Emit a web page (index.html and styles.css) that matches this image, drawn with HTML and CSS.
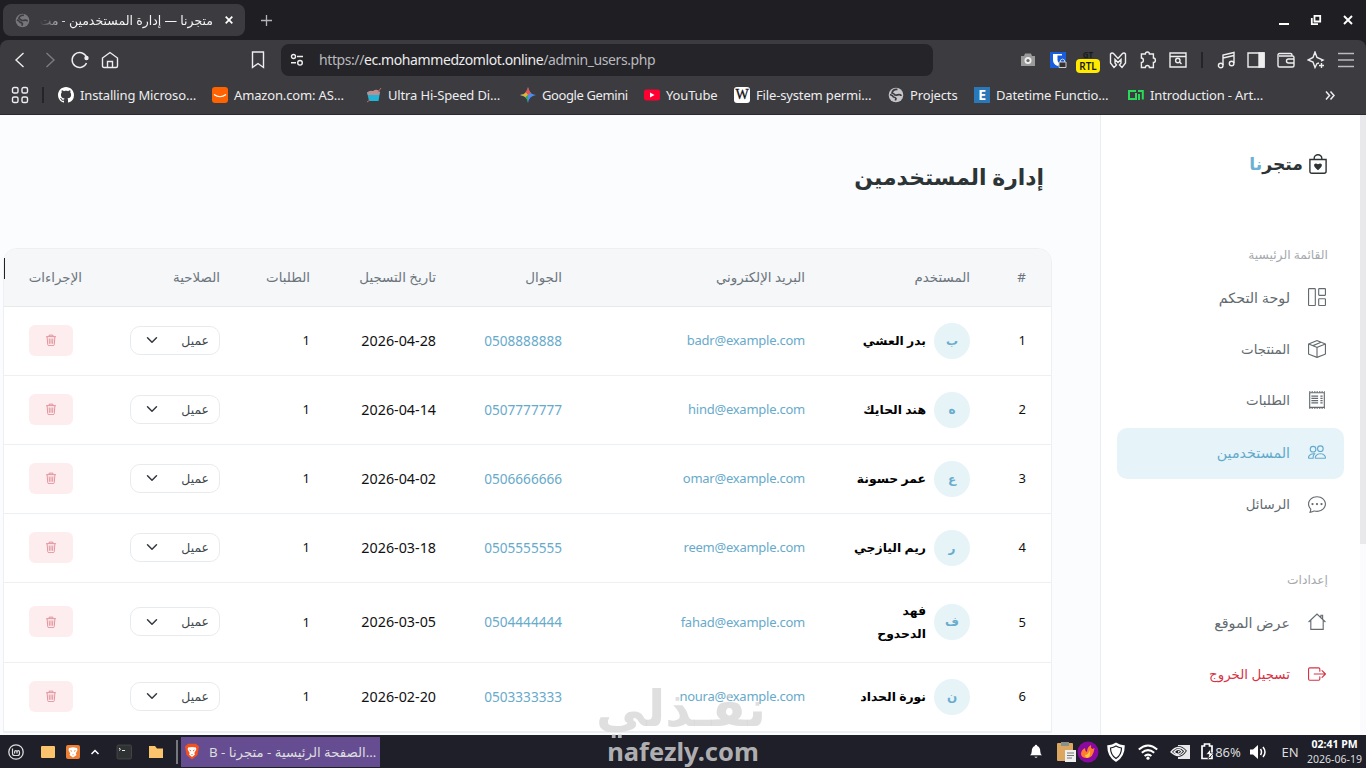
FILE: index.html
```html
<!DOCTYPE html>
<html lang="ar">
<head>
    <meta charset="UTF-8">
    <meta name="viewport" content="width=device-width, initial-scale=1.0">
    <title>متجرنا — إدارة المستخدمين</title>
    <link rel="stylesheet" href="styles.css">
</head>
<body>

<svg class="defs" xmlns="http://www.w3.org/2000/svg">
    <symbol id="trash" viewBox="0 0 16 16"><path d="M1.500 3.500h13M5.500 3V1.500h5V3M2.800 4l.9 10.200q.1 1.300 1.300 1.300h6q1.200 0 1.300-1.300L13.200 4M5.600 6l.3 7M8 6v7M10.400 6l-.3 7" fill="none" stroke="currentColor" stroke-width="1.200"/></symbol>
    <symbol id="chevron" viewBox="0 0 16 16"><path d="M2 5l6 6 6-6" fill="none" stroke="#343a40" stroke-width="2" stroke-linecap="round" stroke-linejoin="round"/></symbol>
    <symbol id="globe" viewBox="0 0 16 16"><circle cx="8" cy="8" r="7.300" fill="currentColor"/><path d="M9.500 2.500Q5 2 4 6q2 .5 3 2 2.500.3 4-.5 2 0 2 1.500M2 7.500q3 1 3.500 2.500 2 .2 2.500 1.500-.5 1-.5 2" fill="none" stroke="#3b3b40" stroke-width="1.700"/></symbol>
    <symbol id="brave" viewBox="0 0 16 16"><path d="M4.500 0h7L15 3l-1.500 8.500L8 16l-5.500-4.500L1 3z" fill="#f4511e"/><path d="M4 4l4-.6 4 .6.3 2-2 3.500.7 1.500L8 13.500 5 11l.7-1.500-2-3.500z" fill="#fff"/><path d="M5 6l2 .7L6.500 8zM11 6l-2 .7.5 1.300zM7 10.500h2L8 11.600z" fill="#f4511e"/></symbol>
</svg>

<div class="titlebar">
    <div class="tab">
        <svg class="tab-globe" width="15" height="15"><use href="#globe"/></svg>
        <span class="tab-title" dir="rtl">متجرنا — إدارة المستخدمين - مت</span>
        <svg width="8" height="8" viewBox="0 0 8 8"><path d="M.7.7l6.600 6.600M7.300.7L.7 7.300" stroke="#fff" stroke-width="1.700"/></svg>
    </div>
    <svg class="new-tab" width="11" height="11" viewBox="0 0 11 11"><path d="M5.500 0v11M0 5.500h11" stroke="#b4b4b8" stroke-width="1.300"/></svg>
    <div class="window-buttons">
        <svg width="12" height="12" viewBox="0 0 12 12"><path d="M1 10h10" stroke="#fff" stroke-width="2"/></svg>
        <svg width="12" height="12" viewBox="0 0 12 12"><path d="M4.500 1.800h5.700v5.700H4.500zM1.800 4v6.200H8" fill="none" stroke="#fff" stroke-width="1.800"/></svg>
        <svg width="12" height="12" viewBox="0 0 12 12"><path d="M2 2l8 8M10 2l-8 8" stroke="#fff" stroke-width="1.900"/></svg>
    </div>
</div>

<div class="toolbar">
    <div class="nav-buttons">
        <svg viewBox="0 0 18 18"><path d="M12.500 2L5 9l7.500 7" /></svg>
        <svg class="dim" viewBox="0 0 18 18"><path d="M5.500 2L13 9l-7.500 7"/></svg>
        <svg viewBox="0 0 18 18"><path d="M15.500 6A7.500 7.500 0 1 0 15.500 12"/><circle cx="15.500" cy="7" r="1.500" fill="#eee"/></svg>
        <svg viewBox="0 0 18 18"><path d="M1.500 7L9 1.500 16.500 7v8q0 1.500-1.500 1.500H3q-1.500 0-1.500-1.500zM6.500 16v-5.500h5V16"/></svg>
    </div>
    <svg class="bookmark" viewBox="0 0 18 18"><path d="M3.500 1h11v15.500L9 12.500l-5.500 4z"/></svg>
    <div class="urlbar">
        <svg width="14" height="14" viewBox="0 0 14 14"><circle cx="3.500" cy="3.500" r="2"/><path d="M7 3.500h6M1 9.800h5"/><circle cx="10" cy="9.800" r="2.300"/></svg>
        <span>https://<b>ec.mohammedzomlot.online</b>/admin_users.php</span>
    </div>
    <div class="extensions">
        <svg viewBox="0 0 18 18"><path d="M2 5h3l1-2.500h6L13 5h3v10H2z" fill="#9a9a9a" stroke="none"/><circle cx="9" cy="9.500" r="3.500" fill="#eee" stroke="none"/><circle cx="9" cy="9.500" r="1.600" fill="#666" stroke="none"/></svg>
        <svg viewBox="0 0 18 18"><path d="M1 1h16v16H1z" fill="#175ddc" stroke="none"/><path d="M4 3h9v6q0 4-4.500 6Q4 13 4 9z" fill="#fff" stroke="none"/><path d="M10.500 4.500H6V9q0 2.500 2.500 4 2-1 2-3z" fill="#175ddc" stroke="none" transform="translate(2.500)"/><path d="M10 11h7v5.500h-7z" fill="#333" stroke="#ccc" stroke-width="1"/><path d="M11.500 11V9q2-2 4 0v2" stroke="#ccc" stroke-width="1"/></svg>
        <div class="rtl-ext"><small>GT</small><span>RTL</span></div>
        <svg viewBox="0 0 18 18"><path d="M1.500 3Q3 1 5 3l4 4.500L13 3q2-2 3.500 0v9L13 16.500 10.500 14l1.500-2V8.500L9 11.500l-3-3V12l1.500 2L5 16.500 1.500 12z"/></svg>
        <svg viewBox="0 0 18 18"><path d="M3 3h4q0-2 2-2t2 2h4v4q2 0 2 2.200T15 11.500v5h-4q0-2-2-2t-2 2H3v-5q2 0 2-2.200T3 7z" transform="translate(-.6)"/></svg>
        <svg viewBox="0 0 18 18"><path d="M1 2h16v14H1zM1 5.500h16"/><circle cx="8.800" cy="9.500" r="2.200"/><path d="M10.500 11l2 2"/></svg>
        <i class="sep"></i>
        <svg viewBox="0 0 18 18"><path d="M6 14V4l11-2.500V12M6 7l11-2.500"/><circle cx="3.700" cy="14.500" r="2.300"/><circle cx="14.600" cy="12.500" r="2.300"/></svg>
        <svg viewBox="0 0 18 18"><path d="M1 2h16v14H1z"/><path d="M12 2h5v14h-5z" fill="#eee"/></svg>
        <svg viewBox="0 0 18 18"><path d="M15 5V4q0-1.500-1.500-1.500h-11Q1 2.500 1 4v10.500Q1 16 2.500 16h13q1.500 0 1.500-1.500V6.500Q17 5 15.500 5H2M17 8h-5.500q-2 0-2 2t2 2H17"/></svg>
        <svg viewBox="0 0 18 18"><path d="M12 12l-2 .5-2 4-2-5.500L1 9l5-2.500L8 1l2 5.500L16 9l-2 1M14.500 12v5M12 14.500h5"/></svg>
        <svg viewBox="0 0 18 18"><path d="M1 2.500h16M1 9h16M1 15.500h16" stroke="#bbb"/></svg>
    </div>
</div>

<div class="bookmarks">
    <svg class="apps" viewBox="0 0 18 18"><rect x="1.500" y="1.500" width="5.500" height="5.500" rx="1.600"/><rect x="11" y="1.500" width="5.500" height="5.500" rx="1.600"/><rect x="1.500" y="11" width="5.500" height="5.500" rx="1.600"/><rect x="11" y="11" width="5.500" height="5.500" rx="1.600"/></svg>
    <i class="sep"></i>
    <div class="links">
        <a><svg viewBox="0 0 16 16"><path fill="#fff" d="M8 0C3.580 0 0 3.580 0 8c0 3.540 2.290 6.530 5.470 7.590.4.07.55-.17.55-.38 0-.19-.01-.82-.01-1.490-2.010.37-2.530-.49-2.690-.94-.09-.23-.48-.94-.82-1.130-.28-.15-.68-.52-.01-.53.63-.01 1.080.58 1.230.82.72 1.210 1.870.87 2.330.66.07-.52.28-.87.51-1.070-1.780-.2-3.640-.89-3.640-3.950 0-.87.31-1.590.82-2.150-.08-.2-.36-1.020.08-2.120 0 0 .67-.21 2.200.82.64-.18 1.320-.27 2-.27.68 0 1.360.09 2 .27 1.530-1.040 2.200-.82 2.200-.82.44 1.100.16 1.920.08 2.120.51.56.82 1.270.82 2.150 0 3.070-1.870 3.750-3.650 3.950.29.25.54.73.54 1.480 0 1.070-.01 1.930-.01 2.200 0 .21.15.46.55.38A8.012 8.012 0 0 0 16 8c0-4.420-3.580-8-8-8z"/></svg><span>Installing Microso…</span></a>
        <a><svg viewBox="0 0 16 16"><rect width="16" height="16" rx="3" fill="#ff6200"/><path d="M2 7.500q6 4.500 12 0" fill="none" stroke="#fff" stroke-width="1.200"/></svg><span>Amazon.com: AS…</span></a>
        <a><svg viewBox="0 0 16 16"><path d="M1 5h13l-1.500 9H3z" fill="#21b4d6"/><path d="M1 6q2-3 6-2 4-3 7 1l-1 3H2z" fill="#b98f92"/><path d="M12 5l3-4M1 15l3-2" stroke="#c46c5e"/></svg><span>Ultra Hi-Speed Di…</span></a>
        <a><svg viewBox="0 0 16 16"><path d="M8 0q1 7 8 8-7 1-8 8-1-7-8-8 7-1 8-8z" fill="#4a8cf0"/><path d="M8 0q1 4 3 6L8 8 5 5.500Q7.500 4 8 0z" fill="#e5544f"/><path d="M0 8q4-.5 6-2.500L8 8l-2 2.500Q4 8.500 0 8z" fill="#e4b52d"/><path d="M5.500 10L8 8v8q-.5-4-2.500-6z" fill="#35a853"/></svg><span class="tight">Google Gemini</span></a>
        <a><svg viewBox="0 0 16 16"><rect y="2.500" width="16" height="11" rx="2.500" fill="#ff0033"/><path d="M6 5.500v5L10.500 8z" fill="#fff"/></svg><span>YouTube</span></a>
        <a><b class="wiki">W</b><span>File-system permi…</span></a>
        <a><svg class="grey" viewBox="0 0 16 16"><use href="#globe"/></svg><span>Projects</span></a>
        <a><b class="ebox">E</b><span>Datetime Functio…</span></a>
        <a><svg viewBox="0 0 16 16"><path d="M8 4H1v8h7V6M10 4h4.800v8.500M11 7v6" fill="none" stroke="#28d95a" stroke-width="2"/></svg><span>Introduction - Art…</span></a>
    </div>
    <svg class="more" width="10" height="9" viewBox="0 0 10 9"><path d="M1 .5l3.500 4L1 8.500M5.500.5l3.500 4-3.500 4"/></svg>
</div>

<div class="page" dir="rtl">
    <div class="scroll-track"><div class="scroll-thumb"></div></div>

    <aside class="sidebar">
        <div class="brand">
            <svg width="18" height="20" viewBox="0 0 18 20"><path d="M.9 5.500h16.200v11.700q0 2-2 2H2.900q-2 0-2-2zM5.200 5.500V4.200a3.800 3.500 0 0 1 7.600 0v1.300" fill="none" stroke="#2d3436" stroke-width="1.400"/><path d="M9 16.200C2.500 11.800 5.300 8 9 10.300c3.700-2.300 6.500 1.500 0 5.900z" fill="#2d3436"/></svg>
            <span class="brand-name">متجر<em>نا</em></span>
        </div>

        <div class="menu-label">القائمة الرئيسية</div>
        <nav class="menu">
            <a><svg viewBox="0 0 16 16"><path d="M6 1H1v14h5V1zm9 0h-5v5h5V1zm0 9v5h-5v-5h5zM0 1a1 1 0 0 1 1-1h5a1 1 0 0 1 1 1v14a1 1 0 0 1-1 1H1a1 1 0 0 1-1-1V1zm9 0a1 1 0 0 1 1-1h5a1 1 0 0 1 1 1v5a1 1 0 0 1-1 1h-5a1 1 0 0 1-1-1V1zm1 8a1 1 0 0 0-1 1v5a1 1 0 0 0 1 1h5a1 1 0 0 0 1-1v-5a1 1 0 0 0-1-1h-5z"/></svg><span class="wide">لوحة التحكم</span></a>
            <a><svg viewBox="0 0 16 16"><path d="M8.186 1.113a.5.5 0 0 0-.372 0L1.846 3.500l2.404.961L10.404 2l-2.218-.887zm3.564 1.426L5.596 5 8 5.961 14.154 3.500l-2.404-.961zm3.250 1.700-6.500 2.600v7.922l6.500-2.600V4.240zM7.500 14.762V6.838L1 4.239v7.923l6.500 2.600zM7.443.184a1.500 1.500 0 0 1 1.114 0l7.129 2.852A.5.5 0 0 1 16 3.500v8.662a1 1 0 0 1-.629.928l-7.185 2.874a.5.5 0 0 1-.372 0L.63 13.090a1 1 0 0 1-.63-.928V3.500a.5.5 0 0 1 .314-.464L7.443.184z"/></svg><span>المنتجات</span></a>
            <a><svg viewBox="0 0 16 16"><path d="M1.500 1.500h13v13h-13z" fill="none" stroke="currentColor"/><path d="M1 .8h14M1 15.200h14" stroke="currentColor" stroke-dasharray="1.200 1"/><path d="M3 4.500h6M3 6.500h6M3 8.500h6M3 10.500h6M11 4.500h2M11 6.500h2M11 8.500h2M11 10.500h2" stroke="currentColor"/></svg><span>الطلبات</span></a>
            <a class="active"><svg viewBox="0 0 16 16"><path d="M15 14s1 0 1-1-1-4-5-4-5 3-5 4 1 1 1 1h8zm-7.978-1A.261.261 0 0 1 7 12.996c.001-.264.167-1.030.76-1.720C8.312 10.629 9.282 10 11 10c1.717 0 2.687.63 3.240 1.276.593.69.758 1.457.76 1.720l-.008.002A.274.274 0 0 1 15 13H7.022zM11 7a2 2 0 1 0 0-4 2 2 0 0 0 0 4zm3-2a3 3 0 1 1-6 0 3 3 0 0 1 6 0zM6.936 9.280a5.880 5.880 0 0 0-1.230-.247A7.350 7.350 0 0 0 5 9c-4 0-5 3-5 4 0 .667.333 1 1 1h4.216A2.238 2.238 0 0 1 5 13c0-1.010.377-2.042 1.090-2.904.243-.294.526-.569.846-.816zM4.920 10A5.493 5.493 0 0 0 4 13H1c0-.26.164-1.030.76-1.724.545-.636 1.492-1.256 3.160-1.275zM1.500 5.500a3 3 0 1 1 6 0 3 3 0 0 1-6 0zm3-2a2 2 0 1 0 0 4 2 2 0 0 0 0-4z"/></svg><span class="wide">المستخدمين</span></a>
            <a><svg viewBox="0 0 16 16"><path d="M5 8a1 1 0 1 1-2 0 1 1 0 0 1 2 0zm4 0a1 1 0 1 1-2 0 1 1 0 0 1 2 0zm3 1a1 1 0 1 0 0-2 1 1 0 0 0 0 2z"/><path d="m2.165 15.803.02-.004c1.830-.363 2.948-.842 3.468-1.105A9.060 9.060 0 0 0 8 15c4.418 0 8-3.134 8-7s-3.582-7-8-7-8 3.134-8 7c0 1.760.743 3.370 1.970 4.600a10.437 10.437 0 0 1-.524 2.318l-.003.011a10.722 10.722 0 0 1-.244.637c-.079.186.074.394.273.362a21.673 21.673 0 0 0 .693-.125zm.8-3.108a1 1 0 0 0-.287-.801C1.618 10.830 1 9.468 1 8c0-3.192 3.004-6 7-6s7 2.808 7 6c0 3.193-3.004 6-7 6a8.060 8.060 0 0 1-2.088-.272 1 1 0 0 0-.711.074c-.387.196-1.240.57-2.634.893a10.970 10.970 0 0 0 .398-2z"/></svg><span>الرسائل</span></a>
        </nav>

        <div class="menu-label second">إعدادات</div>
        <nav class="menu">
            <a><svg viewBox="0 0 16 16"><path d="M.5 8L8 1l7.500 7M2.500 6.500v8h11v-8M11.500 4V2h1.500v3.500" fill="none" stroke="currentColor"/></svg><span class="wide">عرض الموقع</span></a>
            <a class="logout"><svg viewBox="0 0 16 16"><path d="M10 12.500a.5.5 0 0 1-.5.5h-8a.5.5 0 0 1-.5-.5v-9a.5.5 0 0 1 .5-.5h8a.5.5 0 0 1 .5.5v2a.5.5 0 0 0 1 0v-2A1.500 1.500 0 0 0 9.500 2h-8A1.500 1.500 0 0 0 0 3.500v9A1.500 1.500 0 0 0 1.500 14h8a1.500 1.500 0 0 0 1.500-1.500v-2a.5.5 0 0 0-1 0v2z"/><path d="M15.854 8.354a.5.5 0 0 0 0-.708l-3-3a.5.5 0 0 0-.708.708L14.293 7.500H5.500a.5.5 0 0 0 0 1h8.793l-2.147 2.146a.5.5 0 0 0 .708.708l3-3z"/></svg><span>تسجيل الخروج</span></a>
        </nav>
    </aside>

    <main class="content">
        <h1>إدارة المستخدمين</h1>
        <i class="caret"></i>

        <div class="card">
            <div class="row head">
                <div>#</div><div>المستخدم</div><div>البريد الإلكتروني</div><div>الجوال</div><div>تاريخ التسجيل</div><div>الطلبات</div><div>الصلاحية</div><div>الإجراءات</div>
            </div>
            <div class="row">
                <div>1</div>
                <div class="user"><span class="avatar">ب</span><b>بدر العشي</b></div>
                <div class="mail">badr@example.com</div><div class="phone">0508888888</div><div class="date">2026-04-28</div><div>1</div>
                <div><span class="select">عميل<svg width="12" height="12"><use href="#chevron"/></svg></span></div>
                <div class="actions"><span class="delete"><svg width="12" height="12"><use href="#trash"/></svg></span></div>
            </div>
            <div class="row">
                <div>2</div>
                <div class="user"><span class="avatar">ه</span><b>هند الحايك</b></div>
                <div class="mail">hind@example.com</div><div class="phone">0507777777</div><div class="date">2026-04-14</div><div>1</div>
                <div><span class="select">عميل<svg width="12" height="12"><use href="#chevron"/></svg></span></div>
                <div class="actions"><span class="delete"><svg width="12" height="12"><use href="#trash"/></svg></span></div>
            </div>
            <div class="row">
                <div>3</div>
                <div class="user"><span class="avatar">ع</span><b>عمر حسونة</b></div>
                <div class="mail">omar@example.com</div><div class="phone">0506666666</div><div class="date">2026-04-02</div><div>1</div>
                <div><span class="select">عميل<svg width="12" height="12"><use href="#chevron"/></svg></span></div>
                <div class="actions"><span class="delete"><svg width="12" height="12"><use href="#trash"/></svg></span></div>
            </div>
            <div class="row">
                <div>4</div>
                <div class="user"><span class="avatar">ر</span><b>ريم اليازجي</b></div>
                <div class="mail">reem@example.com</div><div class="phone">0505555555</div><div class="date">2026-03-18</div><div>1</div>
                <div><span class="select">عميل<svg width="12" height="12"><use href="#chevron"/></svg></span></div>
                <div class="actions"><span class="delete"><svg width="12" height="12"><use href="#trash"/></svg></span></div>
            </div>
            <div class="row tall">
                <div>5</div>
                <div class="user"><span class="avatar">ف</span><b>فهد<br>الدحدوح</b></div>
                <div class="mail">fahad@example.com</div><div class="phone">0504444444</div><div class="date">2026-03-05</div><div>1</div>
                <div><span class="select">عميل<svg width="12" height="12"><use href="#chevron"/></svg></span></div>
                <div class="actions"><span class="delete"><svg width="12" height="12"><use href="#trash"/></svg></span></div>
            </div>
            <div class="row">
                <div>6</div>
                <div class="user"><span class="avatar">ن</span><b>نورة الحداد</b></div>
                <div class="mail">noura@example.com</div><div class="phone">0503333333</div><div class="date">2026-02-20</div><div>1</div>
                <div><span class="select">عميل<svg width="12" height="12"><use href="#chevron"/></svg></span></div>
                <div class="actions"><span class="delete"><svg width="12" height="12"><use href="#trash"/></svg></span></div>
            </div>
        </div>
    </main>
</div>

<div class="taskbar">
    <div class="launchers">
        <svg viewBox="0 0 16 16"><circle cx="8" cy="8" r="7.200" fill="none" stroke="#ddd" stroke-width="1.300"/><path d="M4.500 4.500v5q0 2 2 2h3q2 0 2-2V8q0-1.300-1.200-1.300T9 8v1.500M9 8q0-1.300-1.200-1.300T6.600 8v1.500" fill="none" stroke="#ddd" stroke-width="1.200"/></svg>
        <svg viewBox="0 0 16 16"><rect x="1" y="2" width="14" height="12" rx="1" fill="#fbc36b"/></svg>
        <svg viewBox="0 0 16 16"><rect x="1" y="1" width="14" height="14" rx="2" fill="#ee8036"/><path d="M4 4l4-.8L12 4l.5 2-1.700 3.500.7 1.500L8 13.500 4.500 11l.7-1.500L3.500 6z" fill="#fff"/><path d="M5 6l2 .7L6.500 8zM11 6l-2 .7.5 1.300zM7 10.500h2L8 11.600z" fill="#ee8036"/></svg>
        <svg viewBox="0 0 16 16"><path d="M4.500 10L8 6.500l3.500 3.500" fill="none" stroke="#fff" stroke-width="1.500"/></svg>
        <svg viewBox="0 0 16 16"><rect x="1" y="1" width="14.500" height="14" rx="1.500" fill="#2f3233" stroke="#555" stroke-width=".6"/><path d="M3 4l1.500 1.300L3 6.500M6 6.500h3" fill="none" stroke="#fff" stroke-width=".9"/></svg>
        <svg viewBox="0 0 16 16"><path d="M1 2h6l2 2.500h6V14H1z" fill="#fbc36b"/></svg>
    </div>
    <div class="task">
        <svg width="16" height="17" viewBox="0 0 16 16"><use href="#brave"/></svg>
        <span dir="ltr">B - <bdi>الصفحة الرئيسية - متجرنا</bdi>…</span>
    </div>
    <div class="tray">
        <svg width="12" height="15" viewBox="0 0 14 16"><path d="M7 0q1.300 0 1.500 1.500Q12 3 12 8q0 3 2 4.500H0Q2 11 2 8q0-5 3.500-6.500Q5.700 0 7 0zM5 14h4q-2 2.500-4 0z" fill="#fff"/></svg>
        <svg width="20" height="21" viewBox="0 0 20 21"><rect x="1" y="2" width="16" height="18" rx="1" fill="#dca660"/><path d="M5 1h8v4H5z" fill="#88908a"/><path d="M9 9h11v12H9z" fill="#eee"/><path d="M11 12h7M11 14.500h7M11 17h5" stroke="#777"/></svg>
        <svg width="22" height="22" viewBox="0 0 22 22"><circle cx="11" cy="11" r="10.500" fill="#8a0aa0"/><path d="M4 13q0-4 4-6 0 3 2 4 0-5 4-7-.5 3 1.500 4l2-1q-1 10-8 10-5 0-5.500-4z" fill="#ff7b2e"/><path d="M8 14q3 0 5-5 1 7-3 8-2-1-2-3z" fill="#ffc93d"/></svg>
        <svg width="20" height="20" viewBox="0 0 20 20"><path d="M10 1.300q3.500 2.500 8 2.700 0 10.500-8 15Q2 14.500 2 4q4.500-.2 8-2.700z" fill="#fff" stroke="#fff" stroke-width="1.500"/><path d="M10 4q2.500 1.500 5.500 2 0 7-5.500 10.500Q4.500 13 4.500 6 7.500 5.500 10 4z" stroke="#1e1f29" stroke-width="1.200" fill="#fff"/></svg>
        <svg width="20" height="16" viewBox="0 0 20 16"><path d="M.8 5.500q9.200-8 18.400 0M3.800 8.800q6.200-5.300 12.400 0M6.600 12q3.400-2.800 6.800 0" fill="none" stroke="#fff" stroke-width="2"/><circle cx="10" cy="14.200" r="1.600" fill="#fff"/></svg>
        <svg width="20" height="14" viewBox="0 0 20 14"><path d="M8 0h12v14H8z" fill="#e8e8e8"/><path d="M1 7q7-8.500 14-1-6 8.500-14 1zM4 7q4-5 8-.5-3.500 5-8 .5z" fill="none" stroke="#1e1f29" stroke-width="3"/><path d="M1 7q7-8.500 14-1-6 8.500-14 1zM4 7q4-5 8-.5-3.500 5-8 .5z" fill="none" stroke="#eee" stroke-width="1.300"/></svg>
        <span class="battery"><svg width="14" height="17" viewBox="0 0 14 17"><path d="M1 3h2.500V1h5v2H11v12.500H1z" fill="none" stroke="#fff" stroke-width="1.700"/><path d="M9.500 6L5 11.500h3L7 16l6-6H9.500z" fill="#fff" stroke="#1e1f29" stroke-width=".7"/></svg>86%</span>
        <svg width="17" height="14" viewBox="0 0 17 14"><path d="M0 4.500h3L8 0v14L3 9.500H0z" fill="#fff"/><path d="M10.500 4q2 3 0 6M13 2q4 5 0 10" fill="none" stroke="#fff" stroke-width="1.500"/></svg>
        <span class="lang">EN</span>
    </div>
    <div class="clock"><b>02:41 PM</b><span>2026-06-19</span></div>
</div>

<div class="watermark">
    <div class="wm-ar" dir="rtl">نفـذلي</div>
    <div class="wm-en">nafezly.com</div>
</div>

</body>
</html>
```
FILE: styles.css
```css
* {
    box-sizing: border-box;
}

body {
    margin: 0;
    width: 1366px;
    height: 768px;
    overflow: hidden;
    display: flex;
    flex-direction: column;
    background: #1f1e23;
    font-family: "Noto Sans", "DejaVu Sans", sans-serif;
    font-size: 13px;
}

svg {
    flex: none;
    display: block;
}

.defs {
    position: absolute;
    width: 0;
    height: 0;
}

/* browser window */
.titlebar {
    height: 40px;
    flex: none;
    display: flex;
    align-items: center;
    background: #1f1e23;
}

.tab {
    width: 242px;
    height: 32px;
    margin-left: 3px;
    padding: 0 12px 0 12px;
    display: flex;
    align-items: center;
    border-radius: 8px;
    background: #3b3b40;
    color: #f2f2f2;
}

.tab-globe {
    color: #77777b;
}

.tab-title {
    width: 174px;
    margin-left: 9px;
    margin-right: 12px;
    flex: none;
    font-size: 12.5px;
    white-space: nowrap;
    overflow: hidden;
    -webkit-mask-image: linear-gradient(to right, transparent, #000 30px);
    mask-image: linear-gradient(to right, transparent, #000 30px);
}

.new-tab {
    margin-left: 16px;
}

.window-buttons {
    margin-left: auto;
    margin-right: 12px;
    display: flex;
    gap: 20px;
}

.toolbar {
    height: 40px;
    flex: none;
    display: flex;
    align-items: center;
    background: #3b3b40;
    border-radius: 8px 8px 0 0;
}

.toolbar svg, .apps {
    width: 18px;
    height: 18px;
    fill: none;
    stroke: #eee;
    stroke-width: 1.4;
}

.nav-buttons {
    display: flex;
    gap: 12px;
    margin-left: 11px;
}

.nav-buttons .dim {
    stroke: #7c7c80;
}

.toolbar .bookmark {
    margin-left: 130px;
}

.urlbar {
    width: 652px;
    height: 32px;
    margin-left: 14px;
    padding-left: 9px;
    padding-bottom: 1px;
    display: flex;
    align-items: center;
    gap: 15px;
    border-radius: 8px;
    background: #252429;
    color: #b9b9bd;
    font-size: 14px;
    letter-spacing: -0.41px;
}

.urlbar svg {
    width: 14px;
    height: 14px;
}

.urlbar b {
    font-weight: 400;
    color: #ececec;
}

.extensions {
    margin-left: 80px;
    display: grid;
    grid-template-columns: repeat(6, 30px) 18px repeat(5, 30px);
    justify-items: center;
    align-items: center;
}

.sep {
    width: 2px;
    height: 16px;
    background: #252429;
}

.rtl-ext {
    width: 24px;
    height: 18px;
    text-align: center;
    font-size: 10px;
    color: #1a1a1a;
}

.rtl-ext small {
    display: block;
    font-size: 8px;
    font-weight: 700;
    line-height: 8px;
}

.rtl-ext span {
    display: block;
    height: 14px;
    line-height: 14px;
    border-radius: 4px;
    background: #ffea00;
    font-weight: 600;
}

.bookmarks {
    height: 35px;
    flex: none;
    display: flex;
    align-items: center;
    padding-bottom: 4px;
    background: #3b3b40;
    border-bottom: 1px solid #2b2b2f;
    color: #ededed;
}

.apps {
    margin-left: 11px;
    margin-right: 13px;
}

.links {
    margin-left: 14px;
    display: grid;
    grid-template-columns: 154px 154px 154px 124px 90px 154px 86px 154px 170px;
}

.links a {
    display: flex;
    align-items: center;
    gap: 6px;
    white-space: nowrap;
    letter-spacing: -0.15px;
}

.links .tight {
    letter-spacing: -0.4px;
}

.links svg, .wiki, .ebox {
    width: 16px;
    height: 16px;
}

.links .grey {
    color: #c6c6c8;
}

.wiki, .ebox {
    line-height: 16px;
    text-align: center;
    font-size: 14px;
}

.wiki {
    border-radius: 3px;
    background: #fff;
    color: #111;
    font-family: "Liberation Serif", serif;
    font-weight: 400;
    -webkit-text-stroke: 0.3px #111;
}

.ebox {
    background: #2a78b8;
    color: #fff;
}

.more {
    margin-left: 27px;
    fill: none;
    stroke: #eee;
    stroke-width: 1.5;
}

/* admin page */
.page {
    height: 620px;
    flex: none;
    display: flex;
    overflow: hidden;
    background: #fbfcfe;
}

.scroll-track {
    width: 6px;
    flex: none;
    background: #fbfbfd;
}

.scroll-thumb {
    height: 429px;
    background: #e9e9ec;
}

.sidebar {
    width: 260px;
    flex: none;
    padding: 0 16px;
    background: #fff;
    border-left: 1px solid #e9eef3;
}

.brand {
    height: 40px;
    margin-top: 29px;
    padding-right: 17px;
    display: flex;
    align-items: center;
    gap: 6px;
}

.brand-name {
    padding-bottom: 2px;
    font-size: 17.2px;
    font-weight: 700;
    color: #2d3436;
}

.brand-name em {
    font-style: normal;
    color: #6cb1d3;
}

.menu-label {
    height: 24px;
    margin-top: 59px;
    padding-right: 16px;
    line-height: 24px;
    font-size: 12.3px;
    color: #a5a9ad;
}

.menu-label.second {
    margin-top: 37px;
}

.menu {
    margin-top: 6px;
}

.menu a {
    height: 51.6px;
    padding-right: 18px;
    padding-bottom: 3px;
    display: flex;
    align-items: center;
    gap: 18px;
    border-radius: 10px;
    font-size: 13.4px;
    color: #636b70;
}

.menu .wide {
    font-size: 14.3px;
}

.menu svg {
    width: 18px;
    height: 18px;
    fill: currentColor;
}

.menu .active {
    background: #e6f4f9;
    color: #63a9cc;
}

.menu .logout {
    color: #d63344;
}

.content {
    position: relative;
    flex: 1;
}

h1 {
    height: 40px;
    margin: 42px 56px 0 0;
    line-height: 40px;
    font-size: 21.9px;
    font-weight: 700;
    color: #2d3436;
}

.caret {
    position: absolute;
    left: 4px;
    top: 143px;
    width: 1px;
    height: 21px;
    background: #222;
}

.card {
    width: 1049px;
    margin: 51px 48px 0 0;
    border: 1px solid #edf0f3;
    border-radius: 14px 14px 0 0;
    background: #fff;
    overflow: hidden;
}

.row {
    height: 69px;
    display: grid;
    grid-template-columns: 57px 165px 243px 126px 126px 90px 138px 100px;
    align-items: center;
    padding-bottom: 2px;
    border-bottom: 1px solid #edf0f2;
    color: #111;
}

.row > div {
    padding-right: 24px;
    white-space: nowrap;
}

.row > div:first-child {
    padding-right: 25px;
}

.row.tall {
    height: 80px;
}

.row.head {
    height: 58px;
    background: #f5f7f9;
    border-bottom-color: #e6eaed;
    color: #6c757d;
    font-size: 13.4px;
}

.user {
    display: flex;
    align-items: center;
    gap: 8px;
}

.user b {
    font-size: 12.4px;
    line-height: 23px;
    color: #000;
}

.avatar {
    width: 36px;
    height: 36px;
    margin-top: 1px;
    border-radius: 50%;
    background: #e6f4f8;
    color: #6aaccd;
    font-size: 12px;
    font-weight: 700;
    line-height: 35px;
    text-align: center;
}

.mail, .phone {
    color: #67aacb;
}

.mail {
    letter-spacing: -0.25px;
}

.phone {
    font-size: 13.6px;
}

.date {
    font-size: 14.3px;
}

.select {
    width: 90px;
    height: 29px;
    padding: 0 10px 0 15px;
    display: flex;
    align-items: center;
    justify-content: space-between;
    border: 1px solid #e8ebee;
    border-radius: 10px;
    font-size: 12.4px;
    color: #444b50;
}

.row > .actions {
    display: flex;
    padding-right: 33px;
}

.delete {
    width: 44px;
    height: 31px;
    display: flex;
    align-items: center;
    justify-content: center;
    border-radius: 6px;
    background: #feedef;
    color: #df8a93;
}

/* desktop panel */
.taskbar {
    height: 33px;
    flex: none;
    display: flex;
    align-items: center;
    background: #1e1f29;
    color: #ddd;
}

.launchers {
    width: 178px;
    height: 24px;
    display: grid;
    grid-template-columns: 32px 32px 18px 26px 32px 32px;
    justify-items: center;
    align-items: center;
    border-right: 2px solid #77787f;
}

.launchers svg {
    width: 16px;
    height: 16px;
}

.task {
    width: 199px;
    height: 30px;
    margin-left: 3px;
    padding-left: 3px;
    display: flex;
    align-items: center;
    gap: 9px;
    background: #664d92;
    font-size: 13.3px;
    white-space: nowrap;
}

.tray {
    margin-left: auto;
    display: grid;
    grid-template-columns: 30px 30px 14px 42px 22px 42px 40px 34px 30px;
    justify-items: center;
    align-items: center;
}

.battery {
    display: flex;
    align-items: center;
}

.clock {
    width: 61px;
    padding-right: 2px;
    display: flex;
    flex-direction: column;
    align-items: center;
    font-size: 10.5px;
    line-height: 15px;
}

.clock b {
    color: #fff;
}

.watermark {
    position: absolute;
    left: 600px;
    top: 677px;
    width: 166px;
    text-align: center;
    color: rgba(215, 215, 215, 0.8);
    font-weight: 700;
}

.wm-ar {
    font-size: 50px;
    line-height: 60px;
}

.wm-en {
    font-size: 25.5px;
    line-height: 28px;
}
```
